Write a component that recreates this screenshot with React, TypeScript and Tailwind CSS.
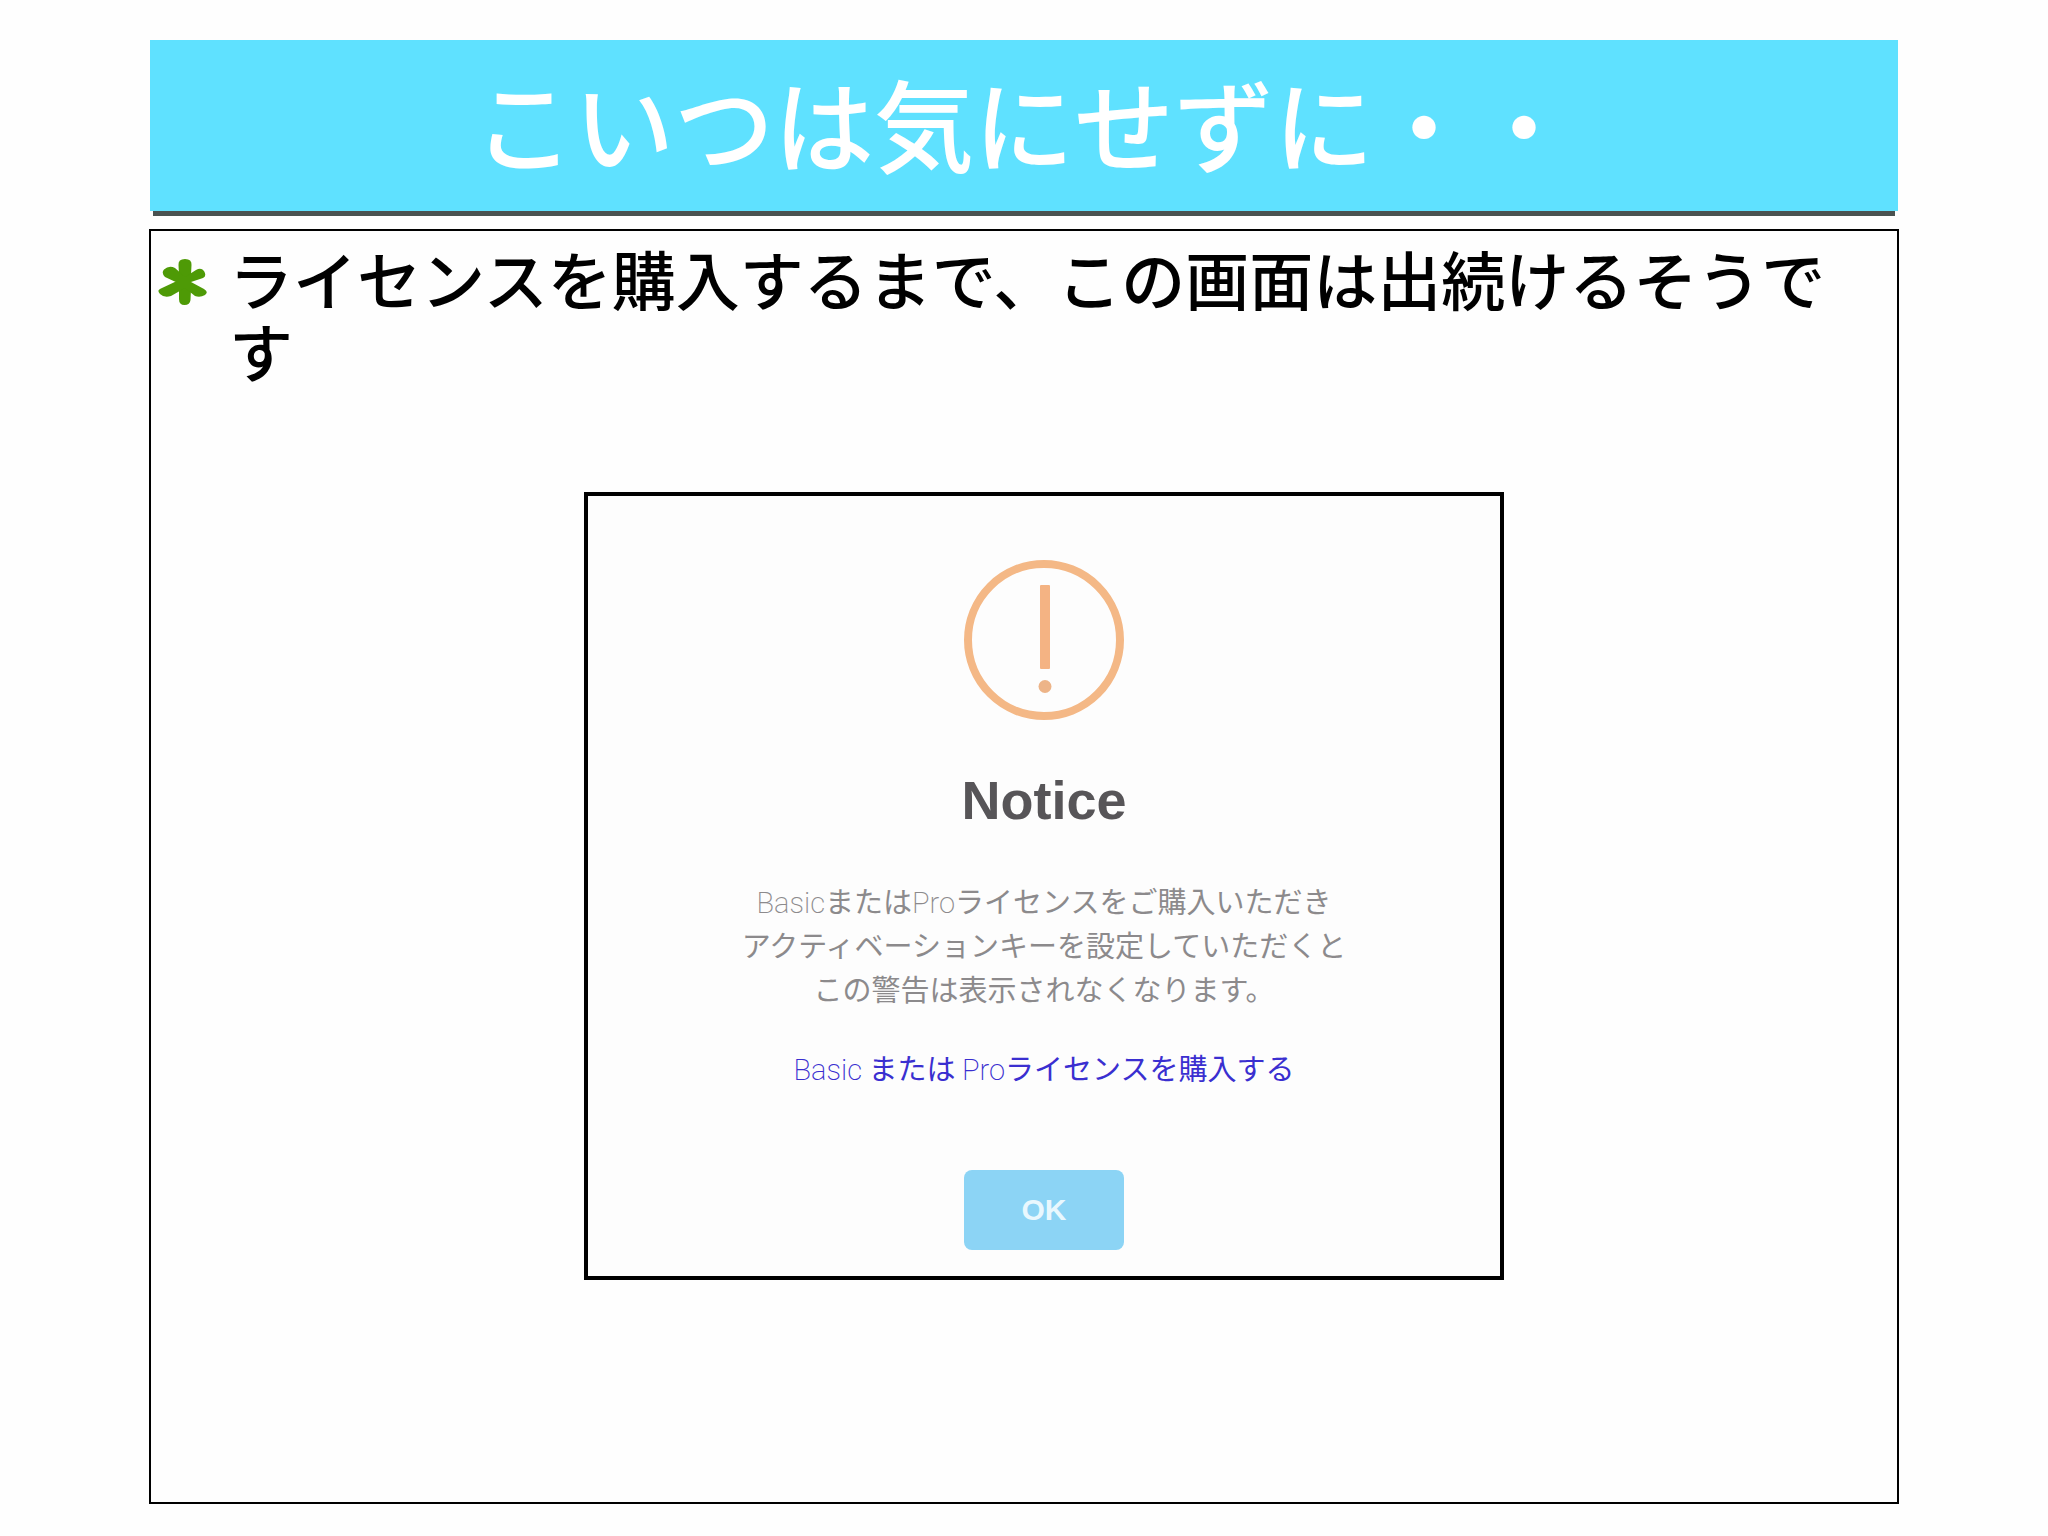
import type { ReactNode } from "react";

function AsteriskBullet() {
  return (
    <svg viewBox="0 0 49 46" className="mt-[18px] h-[46px] w-[49px] shrink-0" aria-hidden="true">
      <g fill="#4e9a06">
        <path d="M21 16 20.500 6Q20 0 27 0 34 0 33.500 6L33 16 31 23 33 30 32.500 41Q32 46 26.500 46 21 46 21 40L21 30 23 23Z" />
        <path d="M22 25 7 18Q3 14 6 10.500 11 6 17 9L27 18 38 11Q43 8 46 12 49 17 45 19L33 23 46 30Q51 33 47 36 42 39 37 37L27 29 13 37Q6 39 2 35-2 31 4 29L21 21Z" />
      </g>
    </svg>
  );
}

function WarningIcon() {
  return (
    <svg viewBox="0 0 160 160" className="h-40 w-40" aria-hidden="true">
      <circle cx="80" cy="80" r="76" fill="none" stroke="#f4b886" strokeWidth="8" />
      <rect x="76" y="25" width="10" height="84" rx="1" fill="#f4b383" />
      <circle cx="81" cy="126.500" r="6.500" fill="#edb488" />
    </svg>
  );
}

function Latin({ children }: { children: ReactNode }) {
  return <span className="leading-none font-extralight font-['Roboto',sans-serif]">{children}</span>;
}

function NoticeDialog() {
  return (
    <section
      role="dialog"
      aria-labelledby="notice-title"
      className="ml-[433px] flex w-[920px] max-w-full flex-col items-center border-4 border-black bg-[#fdfdfd] pt-16 pb-[26px] text-[29px] leading-[44px] text-[#8c8a8c] font-['Noto_Sans_CJK_JP',sans-serif]"
    >
      <WarningIcon />
      <h2
        id="notice-title"
        className="mt-12 text-[54px] leading-[64px] font-bold text-[#575558] font-['Liberation_Sans',sans-serif]"
      >
        Notice
      </h2>
      <p className="mt-[46px] text-center">
        <Latin>Basic</Latin>または<Latin>Pro</Latin>ライセンスをご購入いただき
        <br />
        アクティベーションキーを設定していただくと
        <br />
        この警告は表示されなくなります。
      </p>
      <a href="#license" className="mt-[35px] text-[#3a2fd0]">
        <Latin>Basic</Latin> または <Latin>Pro</Latin>ライセンスを購入する
      </a>
      <button
        type="button"
        className="mt-[81px] h-20 w-40 rounded-lg bg-[#8cd4f5] text-[30px] font-bold text-[#e9f8fe] font-['Liberation_Sans',sans-serif]"
      >
        OK
      </button>
    </section>
  );
}

export default function App() {
  return (
    <main
      lang="ja"
      className="flex min-h-screen flex-col bg-[#fefefe] px-[149px] pt-10 pb-8 font-['Noto_Sans_CJK_JP',sans-serif]"
    >
      <header className="mx-px">
        <h1 className="bg-[#5fe1ff] pt-2.5 pb-[17px] text-center text-[100px] leading-[144px] font-medium text-white">
          こいつは気にせずに・・
        </h1>
        <div className="mx-[3px] h-[5px] bg-[#4a5250]" />
      </header>
      <div className="mt-[13px] flex-1 border-2 border-black">
        <ul className="pt-2.5 pr-10 pl-[7px]">
          <li className="flex gap-[22px]">
            <AsteriskBullet />
            <p className="text-[64px] leading-[72px] font-medium text-black">
              ライセンスを購入するまで、この画面は出続けるそうです
            </p>
          </li>
        </ul>
        <div className="mt-[107px]">
          <NoticeDialog />
        </div>
      </div>
    </main>
  );
}
